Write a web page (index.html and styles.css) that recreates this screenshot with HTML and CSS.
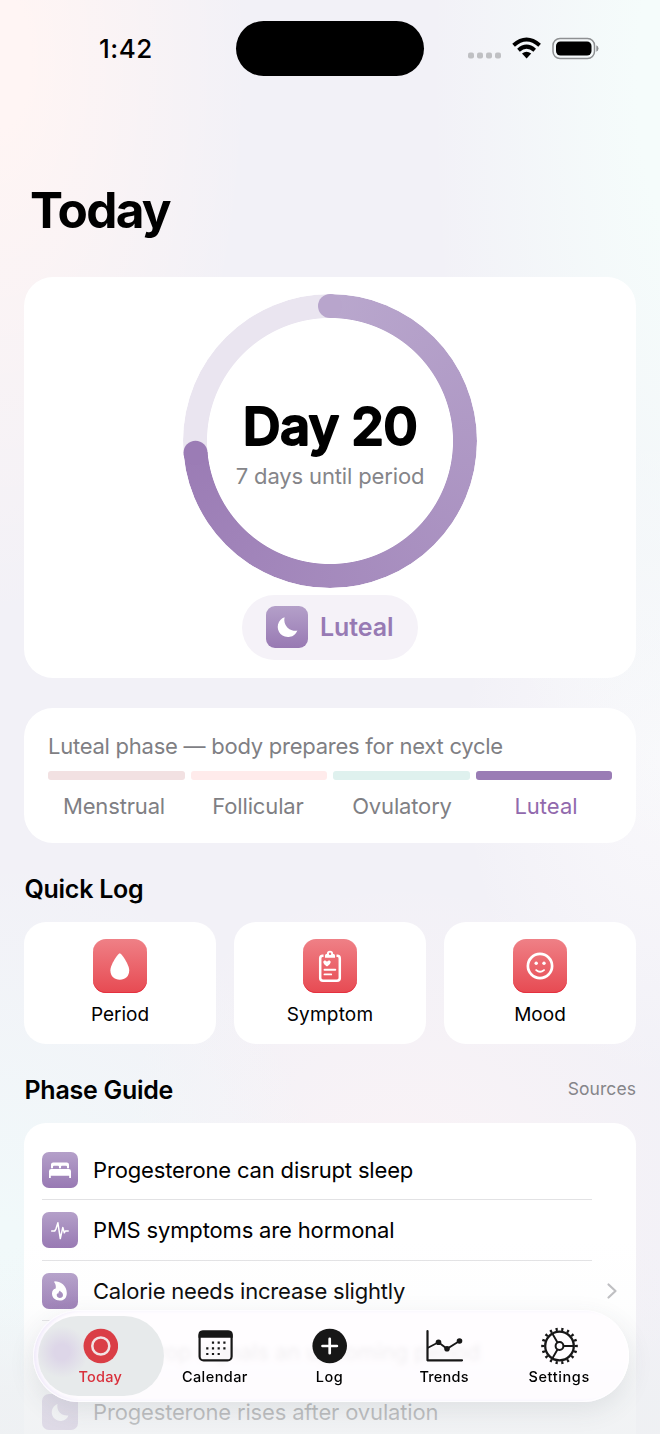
FILE: index.html
```html
<!DOCTYPE html>
<html lang="en">
<head>
<meta charset="utf-8">
<title>Today</title>
<link rel="stylesheet" href="styles.css">
</head>
<body>
<div class="screen">
  <header class="status">
    <span class="time">1:42</span>
    <span class="island"></span>
    <svg class="indicators" width="134" height="28" viewBox="0 0 134 28">
      <g fill="#bfc0c3"><rect x="1" y="17.500" width="6" height="6" rx="2"/><rect x="10" y="17.500" width="6" height="6" rx="2"/><rect x="19" y="17.500" width="6" height="6" rx="2"/><rect x="28" y="17.500" width="6" height="6" rx="2"/></g>
      <g fill="none" stroke="#000" stroke-width="4"><path d="M46.600 10.200Q59.500-1.200 72.600 10.200"/><path d="M51.500 15.200Q59.500 8.200 67.700 15.200"/></g>
      <path d="M55 18.600Q59.500 15 64.200 18.600L59.600 23.600Z" fill="#000"/>
      <rect x="86" y="3.500" width="41.500" height="20" rx="7" fill="none" stroke="#8e9092" stroke-width="1.500"/>
      <rect x="89" y="6.500" width="35.500" height="14" rx="4.500" fill="#000"/>
      <path d="M129.300 10.300q2.200 1 2.200 3.200t-2.200 3.200z" fill="#8e9092"/>
    </svg>
  </header>

  <h1 class="title">Today</h1>

  <main class="content">
    <section class="card cycle">
      <div class="ring">
        <div class="ring-track"></div>
        <svg class="ring-caps" width="294" height="294" viewBox="0 0 294 294">
          <circle cx="147" cy="12" r="12" fill="#b8a5cc"/>
          <circle cx="12.500" cy="158.800" r="12" fill="#9b7cb5"/>
        </svg>
        <svg class="day" width="190" height="68" viewBox="0 0 190 68"><text x="95" y="50" text-anchor="middle">Day 20</text></svg>
        <span class="until">7 days until period</span>
      </div>
      <div class="phase-pill">
        <span class="tile purple pill-tile"><svg width="42" height="42" viewBox="0 0 42 42"><path d="M18.600 11.200A10.200 10.200 0 1 0 31.400 24.600A11 11 0 0 1 18.600 11.200Z" fill="#fff"/></svg></span>
        <span>Luteal</span>
      </div>
    </section>

    <section class="card phases">
      <p class="phase-note">Luteal phase — body prepares for next cycle</p>
      <div class="bars"><i class="bar menstrual"></i><i class="bar follicular"></i><i class="bar ovulatory"></i><i class="bar luteal"></i></div>
      <div class="phase-names"><span>Menstrual</span><span>Follicular</span><span>Ovulatory</span><span class="active">Luteal</span></div>
    </section>

    <h2 class="heading quick-heading">Quick Log</h2>
    <div class="quick">
      <div class="card action"><span class="tile red"><svg width="54" height="54" viewBox="0 0 54 54"><path d="M26.800 14.300C28.300 14.300 36.200 25.500 36.200 31.300C36.200 37.300 32.300 40.800 26.800 40.800S17.400 37.300 17.400 31.300C17.400 25.500 25.300 14.300 26.800 14.300Z" fill="#fff"/></svg></span><span>Period</span></div>
      <div class="card action"><span class="tile red"><svg width="54" height="54" viewBox="0 0 54 54"><path d="M20.500 16.800H19.800Q17.200 16.800 17.200 19.400V39Q17.200 41.700 20 41.700H34Q36.800 41.700 36.800 39V19.400Q36.800 16.800 34.200 16.800H33.500" fill="none" stroke="#fff" stroke-width="2.500"/><path fill-rule="evenodd" d="M22 18.800V16.600Q22 15 23.400 15H23.800Q24 11.700 27 11.700T30.200 15H30.600Q32 15 32 16.600V18.800ZM27 13.600a1.200 1.200 0 1 0 .1 0ZM24 27.600C18.500 23.800 20.300 21.200 22.200 21.500Q23.400 21.700 24 22.700Q24.600 21.700 25.800 21.500C27.700 21.200 29.500 23.800 24 27.600Z" fill="#fff"/><path d="M21.500 30.700H32.300M21.500 35.400H28.200" stroke="#fff" stroke-width="1.900" stroke-linecap="round"/></svg></span><span class="symptom-label">Symptom</span></div>
      <div class="card action"><span class="tile red"><svg width="54" height="54" viewBox="0 0 54 54"><circle cx="27" cy="27" r="12.100" fill="none" stroke="#fff" stroke-width="2.700"/><circle cx="23.200" cy="24.300" r="1.700" fill="#fff"/><circle cx="31" cy="24.300" r="1.700" fill="#fff"/><path d="M23.200 31.100Q27 34.500 31 31.100" fill="none" stroke="#fff" stroke-width="1.900" stroke-linecap="round"/></svg></span><span>Mood</span></div>
    </div>

    <div class="guide-head"><h2 class="heading">Phase Guide</h2><span class="sources">Sources</span></div>
    <section class="guide">
      <div class="row"><span class="tile purple"><svg width="36" height="36" viewBox="0 0 36 36"><path d="M9 16.300V12.500Q9 10.400 11.200 10.400H24.800Q27 10.400 27 12.500V16.300H25V14.800Q25 13.800 24 13.800H20Q19 13.800 19 14.800V16.300H17V14.800Q17 13.800 16 13.800H12Q11 13.800 11 14.800V16.300ZM7 26V19.200Q7 17 9.200 17H26.800Q29 17 29 19.200V26H27.200V23.800H8.800V26Z" fill="#fff"/></svg></span><span class="row-text">Progesterone can disrupt sleep</span></div>
      <div class="row"><span class="tile purple"><svg width="36" height="36" viewBox="0 0 36 36"><path d="M9.700 19H12.700L14 16.800L15.900 10.800L18.300 26.600L20.800 15.400L22.300 20.800L23.300 19H26.200" fill="none" stroke="#fff" stroke-width="1.500" stroke-linecap="round" stroke-linejoin="round"/></svg></span><span class="row-text">PMS symptoms are hormonal</span></div>
      <div class="row calorie"><span class="tile purple"><svg width="36" height="36" viewBox="0 0 36 36"><path fill-rule="evenodd" d="M12.500 8.300C18.500 8.300 24.800 12.500 24.800 19.900C24.800 25 22 27.600 17.600 27.600C13 27.600 10 24.700 10 20.600C10 17.500 11.700 15.700 13.700 15.400C14.200 13 13.500 10.500 12.200 9.200ZM18 17.500C16.300 18.800 16.600 20.200 16 20.900Q15.500 20.500 15.300 20.200C14.300 21 14.400 24.900 18 24.900C20.800 24.900 21.500 22.600 20.600 20.500C19.900 19 18.400 19 18 17.500Z" fill="#fff"/></svg></span><span class="row-text">Calorie needs increase slightly</span><svg class="chevron" width="12" height="18" viewBox="0 0 12 18"><path d="M2.500 2.500L9.500 9L2.500 15.500" fill="none" stroke="#bcbcbf" stroke-width="2.200" stroke-linecap="round" stroke-linejoin="round"/></svg></div>
      <div class="row"><span class="tile purple"></span><span class="row-text">HRV drop signals an upcoming period</span></div>
      <div class="row last"><span class="tile purple"><svg width="36" height="36" viewBox="0 0 36 36"><path d="M15.500 10A8.700 8.700 0 1 0 26.500 21.400A9.500 9.500 0 0 1 15.500 10Z" fill="#fff"/></svg></span><span class="row-text">Progesterone rises after ovulation</span></div>
    </section>
  </main>

  <div class="fade"></div>
  <nav class="tabs">
    <div class="tab selected"><svg width="36" height="36" viewBox="0 0 36 36"><circle cx="18.800" cy="18" r="17.300" fill="#da3e46"/><circle cx="18.800" cy="18" r="8.500" fill="none" stroke="#f1e4e5" stroke-width="2.500"/></svg><span class="t-today">Today</span></div>
    <div class="tab"><svg width="36" height="36" viewBox="0 0 36 36"><rect x="2.600" y="3.600" width="32" height="28.800" rx="4" fill="none" stroke="#171717" stroke-width="2.200"/><path d="M1.500 9.800V6.500Q1.500 2.500 5.500 2.500H31.700Q35.700 2.500 35.700 6.500V9.800Z" fill="#171717"/><g fill="#171717"><path d="M14.900 13.500h2.200v2.200h-2.200zM20.600 13.500h2.200v2.200h-2.200zM26.300 13.500h2.200v2.200h-2.200z"/><path d="M9.200 19.200h2.200v2.200h-2.200zM14.900 19.200h2.200v2.200h-2.200zM20.600 19.200h2.200v2.200h-2.200zM26.300 19.200h2.200v2.200h-2.200z"/><path d="M9.200 24.900h2.200v2.200h-2.200zM14.900 24.900h2.200v2.200h-2.200zM20.600 24.900h2.200v2.200h-2.200z"/></g></svg><span class="t-calendar">Calendar</span></div>
    <div class="tab"><svg width="36" height="36" viewBox="0 0 36 36"><circle cx="18.700" cy="18" r="17.300" fill="#171717"/><path d="M18.700 10.800V25.200M11.500 18H25.900" stroke="#fff" stroke-width="2.700" stroke-linecap="round"/></svg><span class="t-log">Log</span></div>
    <div class="tab"><svg width="40" height="36" viewBox="0 0 40 36"><path d="M3.500 3V32.300H38" fill="none" stroke="#171717" stroke-width="2.200" stroke-linecap="round" stroke-linejoin="round"/><path d="M3.500 20L14.500 14.200L23 20.800L35.500 13" fill="none" stroke="#171717" stroke-width="1.800"/><g fill="#171717"><circle cx="14.500" cy="14.200" r="2.800"/><circle cx="23" cy="20.800" r="2.800"/><circle cx="35.500" cy="13" r="2.800"/></g></svg><span class="t-trends">Trends</span></div>
    <div class="tab"><svg width="38" height="38" viewBox="-19.500 -19 38 38"><g fill="none" stroke="#171717"><circle r="14.300" stroke-width="2.300"/><circle r="3.900" stroke-width="2"/><path d="M4 0H14M-2 3.500L-7.200 12.400M-2-3.500L-7.200-12.400" stroke-width="1.900"/><circle r="16.800" stroke-width="3" pathLength="180" stroke-dasharray="3.800 6.200" stroke-dashoffset="1.900"/></g></svg><span class="t-settings">Settings</span></div>
  </nav>
</div>
</body>
</html>
```
FILE: styles.css
```css
* { box-sizing: border-box; }
body { margin: 0; font-family: Inter, "Liberation Sans", sans-serif; color: #000; }
h1, h2, p { margin: 0; }
svg { display: block; flex: none; }

.screen {
  position: relative;
  width: 660px;
  height: 1434px;
  overflow: hidden;
  background:
    radial-gradient(ellipse 250px 560px at 0 60px, #fff5f4 12%, rgba(255,245,244,0) 100%),
    radial-gradient(ellipse 260px 800px at 690px 80px, #f5fcfb 20%, rgba(245,252,251,0) 100%),
    radial-gradient(ellipse 330px 380px at 0 1240px, #f1f9fa 5%, rgba(241,249,250,0) 100%),
    radial-gradient(ellipse 300px 320px at 400px 1200px, #faf3f6 0%, rgba(250,243,246,0) 100%),
    radial-gradient(ellipse 200px 320px at 660px 760px, #f9f8fb 0%, rgba(249,248,251,0) 100%),
    #f2f1f7;
}

.status { display: flex; align-items: center; height: 97px; padding-left: 98px; }
.time { width: 138px; padding-left: 1px; font-size: 26px; font-weight: 550; letter-spacing: .5px; }
.island { width: 188px; height: 55px; border-radius: 27.500px; background: #000; }
.indicators { margin-left: 43px; }

.title { height: 179.500px; padding: 83px 0 0 30px; font-size: 49.500px; line-height: 60px; font-weight: 700; letter-spacing: -1.700px; }

.content { padding: 0 24px; }
.card { background: #fff; border-radius: 29px; }

.cycle { height: 401.500px; display: flex; flex-direction: column; align-items: center; padding-top: 17.500px; }
.ring { position: relative; width: 294px; height: 294px; display: flex; flex-direction: column; align-items: center; padding-top: 101px; }
.ring-track {
  position: absolute;
  inset: 0;
  border-radius: 50%;
  background: conic-gradient(#b9a7cd 0deg, #9b7cb5 265deg, #eae5f0 265deg);
  -webkit-mask: radial-gradient(circle, transparent 122.600px, #000 123.400px);
  mask: radial-gradient(circle, transparent 122.600px, #000 123.400px);
}
.ring-caps { position: absolute; inset: 0; }
.day { overflow: visible; }
.day text { font: 600 52.500px Inter, sans-serif; stroke: #000; stroke-width: 1.800px; stroke-linejoin: round; letter-spacing: -.7px; }
.until { font-size: 22px; line-height: 26px; color: #858589; letter-spacing: -.14px; }
.phase-pill { width: 176px; height: 65px; margin-top: 6.500px; padding-left: 24px; display: flex; align-items: center; gap: 12px; border-radius: 33px; background: #f5f2f8; color: #977ab4; font-size: 25px; font-weight: 600; letter-spacing: -.1px; }

.tile { display: block; flex: none; overflow: hidden; }
.purple { width: 36px; height: 36px; border-radius: 7px; background: linear-gradient(#b4a0c9, #9879b3); }
.pill-tile { width: 42px; height: 42px; margin-top: -1px; border-radius: 9px; }
.red { width: 54px; height: 54px; border-radius: 13px; background: linear-gradient(#ef8086, #e74a52); box-shadow: inset 0 -1px 0 #e5303f; }

.phases { height: 135px; margin-top: 30px; padding: 23.500px 24px 0; font-size: 22px; color: #7f7f84; }
.phase-note { font-size: 22px; line-height: 28px; letter-spacing: -.25px; }
.bars { display: grid; grid-template-columns: repeat(4, 1fr); gap: 6px; margin-top: 11px; }
.bar { height: 9px; border-radius: 3px; }
.menstrual { background: #f2e1e2; }
.follicular { background: #ffebeb; }
.ovulatory { background: #dff1ee; }
.luteal { background: #9a7cb5; }
.phase-names { display: grid; grid-template-columns: repeat(4, 144px); margin: 12px -6px 0; line-height: 28px; text-align: center; letter-spacing: -.15px; }
.active { color: #9169ad; letter-spacing: 0; }

.heading { font-size: 25px; line-height: 30px; font-weight: 600; letter-spacing: -.27px; padding-left: .5px; }
.quick-heading { margin-top: 30.500px; }
.quick { display: grid; grid-template-columns: repeat(3, 1fr); gap: 18px; margin-top: 18px; }
.action { height: 122px; display: flex; flex-direction: column; align-items: center; padding-top: 17.500px; gap: 9.500px; border-radius: 22px; font-size: 19px; line-height: 24px; }
.symptom-label { letter-spacing: .2px; }
.guide-head { display: flex; justify-content: space-between; align-items: center; margin-top: 31px; }
.sources { margin-top: -2px; font-size: 17.500px; color: #858589; letter-spacing: .07px; }

.guide { height: 400px; margin-top: 18px; padding: 17px 18px 0; border-radius: 22px; background: #fff; }
.row { position: relative; display: flex; align-items: center; gap: 15px; height: 60.670px; font-size: 22px; letter-spacing: -.16px; }
.row::after { content: ""; position: absolute; left: 0; right: 26px; bottom: 0; height: 1px; background: #e2e2e4; }
.row.last::after { display: none; }
.calorie { letter-spacing: -.2px; }
.chevron { margin-left: auto; }

.fade { position: absolute; left: 0; right: 0; top: 1240px; bottom: 0; background: linear-gradient(rgba(238,240,242,0) 0%, rgba(238,240,242,.08) 34%, rgba(238,240,242,.76) 80%, rgba(238,240,242,.82) 100%); }
.tabs {
  position: absolute;
  left: 33px;
  top: 1310px;
  width: 596px;
  height: 92px;
  padding: 6px 5px 0 10px;
  display: grid;
  grid-template-columns: repeat(5, 114.600px);
  border-radius: 46px;
  background: rgba(255,253,255,.9);
  backdrop-filter: blur(2.500px);
  box-shadow: 0 8px 26px rgba(60,65,75,.1), inset 0 0 0 1px rgba(255,255,255,.8), inset 4px 0 4px #f0eafa;
}
.tab { position: relative; display: flex; flex-direction: column; align-items: center; gap: 3.500px; padding-top: 11.500px; font-size: 14.500px; line-height: 20px; font-weight: 500; }
.tab svg { height: 36px; }
.tab:last-child svg { height: 38px; margin: -1px 0; }
.selected { color: #d92f3a; }
.selected::before { content: ""; position: absolute; z-index: -1; left: -5px; top: 0; width: 126px; height: 80px; border-radius: 40px; background: radial-gradient(circle 26px at 24px 36px, #ddd6e8 30%, rgba(221,214,232,0) 100%), #e7eaeb; }
.t-today { letter-spacing: .23px; }
.t-calendar { letter-spacing: .43px; }
.t-log { letter-spacing: .5px; }
.t-trends { letter-spacing: .2px; }
.t-settings { letter-spacing: .6px; padding-left: 1px; }
```
